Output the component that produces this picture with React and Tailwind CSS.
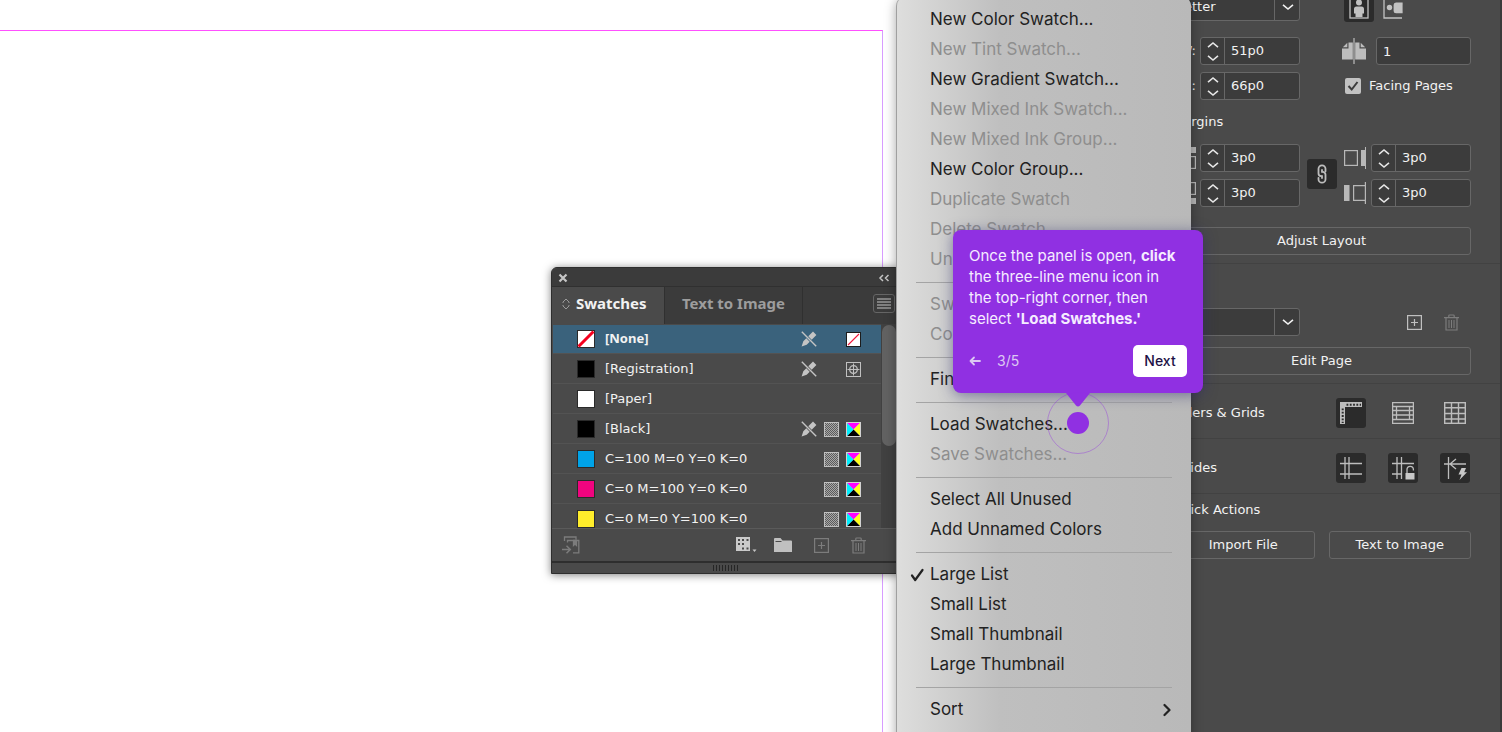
import { useState } from "react";

const MENU = [
  [
    { label: "New Color Swatch..." },
    { label: "New Tint Swatch...", disabled: true },
    { label: "New Gradient Swatch..." },
    { label: "New Mixed Ink Swatch...", disabled: true },
    { label: "New Mixed Ink Group...", disabled: true },
    { label: "New Color Group..." },
    { label: "Duplicate Swatch", disabled: true },
    { label: "Delete Swatch...", disabled: true },
    { label: "Ungroup Color Group", disabled: true },
  ],
  [
    { label: "Swatch Options...", disabled: true },
    { label: "Color Group Options...", disabled: true },
  ],
  [{ label: "Find Swatch..." }],
  [{ label: "Load Swatches..." }, { label: "Save Swatches...", disabled: true }],
  [{ label: "Select All Unused" }, { label: "Add Unnamed Colors" }],
  [
    { label: "Large List", checked: true },
    { label: "Small List" },
    { label: "Small Thumbnail" },
    { label: "Large Thumbnail" },
  ],
  [{ label: "Sort", submenu: true }],
];

const SWATCHES = [
  { name: "[None]", color: "none", locked: true, kind: "none", selected: true },
  { name: "[Registration]", color: "#000000", locked: true, kind: "registration" },
  { name: "[Paper]", color: "#ffffff" },
  { name: "[Black]", color: "#000000", locked: true, kind: "cmyk" },
  { name: "C=100 M=0 Y=0 K=0", color: "#00a3e8", kind: "cmyk" },
  { name: "C=0 M=100 Y=0 K=0", color: "#f0047f", kind: "cmyk" },
  { name: "C=0 M=0 Y=100 K=0", color: "#ffed2b", kind: "cmyk" },
];

/* ---------- icons ---------- */

function Chevron({ up, className }) {
  return (
    <svg viewBox="0 0 12 8" fill="none" stroke="currentColor" strokeWidth="1.6" className={className}>
      <path d={up ? "M1 6.200 6 2l5 4.200" : "M1 1.800 6 6l5-4.200"} />
    </svg>
  );
}

function NoEditIcon() {
  return (
    <svg viewBox="0 0 16 16" className="w-4 h-4 text-[#c4c4c4]">
      <path fill="currentColor" d="M12 .6 15.400 4l-4.700 4.700-3.400-3.400ZM5.300 7.300l3.400 3.400-3 3L.6 15.400l1.700-5.100Z" />
      <path stroke="currentColor" strokeWidth="1.400" d="m.8.800 14.400 14.400" />
    </svg>
  );
}

function TintIcon() {
  return (
    <svg viewBox="0 0 15 15" className="w-[15px] h-[15px]">
      <defs>
        <pattern id="dots" width="2" height="2" patternUnits="userSpaceOnUse">
          <rect width="2" height="2" fill="#a8a8a8" />
          <rect width="1" height="1" fill="#5c5c5c" />
          <rect x="1" y="1" width="1" height="1" fill="#5c5c5c" />
        </pattern>
      </defs>
      <rect width="15" height="15" fill="#c0c0c0" />
      <rect x="1" y="1" width="13" height="13" fill="url(#dots)" />
    </svg>
  );
}

function KindIcon({ kind }) {
  if (kind === "none") {
    return (
      <svg viewBox="0 0 15 15" className="w-[15px] h-[15px]">
        <rect x=".5" y=".5" width="14" height="14" fill="#fff" stroke="#1c1c1c" />
        <path stroke="#f0183c" strokeWidth="1.1" d="M2 13 13 2" />
      </svg>
    );
  }
  if (kind === "registration") {
    return (
      <svg viewBox="0 0 15 15" fill="none" stroke="#c0c0c0" className="w-[15px] h-[15px]">
        <rect x=".5" y=".5" width="14" height="14" />
        <circle cx="7.5" cy="7.5" r="3.8" strokeWidth="1.3" />
        <path d="M7.5 1.5v12M1.5 7.5h12" />
      </svg>
    );
  }
  return (
    <svg viewBox="0 0 15 15" className="w-[15px] h-[15px]">
      <rect width="15" height="15" fill="#d2d2d2" />
      <path fill="#ff00ff" d="M1 1h13L7.500 7.500Z" />
      <path fill="#ffff1e" d="M14 1v13L7.500 7.500Z" />
      <path fill="#000" d="M14 14H1l6.500-6.500Z" />
      <path fill="#00f0ff" d="M1 14V1l6.500 6.500Z" />
    </svg>
  );
}

function NewIcon() {
  return (
    <svg viewBox="0 0 15 15" fill="none" stroke="currentColor" className="w-[15px] h-[15px]">
      <rect x=".6" y=".6" width="13.800" height="13.800" strokeWidth="1.200" />
      <path strokeWidth="1.200" d="M7.500 4v7M4 7.500h7" />
    </svg>
  );
}

function TrashIcon() {
  return (
    <svg viewBox="0 0 15 17" fill="none" stroke="currentColor" className="w-[15px] h-[17px]">
      <path strokeWidth="1.200" d="M0 3.600h15M4.800 3.400V1.800Q4.800 1 5.600 1h3.800q.8 0 .8.800v1.600M2 4v12h11V4" />
      <path d="M5 6v8M7.500 6v8M10 6v8" />
    </svg>
  );
}

function PortraitIcon() {
  return (
    <svg viewBox="0 0 20 24" className="w-5 h-6 text-[#c2c2c2]">
      <rect x="1" y="1" width="18" height="22" fill="none" stroke="currentColor" strokeWidth="1.300" />
      <circle cx="10" cy="7.500" r="3" fill="currentColor" />
      <path fill="currentColor" d="M7.500 11.500h5q2.500 0 2.500 2.500v4.500h-1.500V22h-7v-3.500H5V14q0-2.500 2.500-2.500Z" />
    </svg>
  );
}

function LandscapeIcon() {
  return (
    <svg viewBox="0 0 20 24" className="w-5 h-6 text-[#c2c2c2]">
      <path fill="none" stroke="currentColor" strokeWidth="1.300" d="M19 4H1v19h18" />
      <circle cx="6.500" cy="12.500" r="2.700" fill="currentColor" />
      <path fill="currentColor" d="M13 7.500h6.600v10.800H13q-2.400 0-2.400-2.400V10q0-2.500 2.400-2.500Z" />
    </svg>
  );
}

function SpreadIcon() {
  return (
    <svg viewBox="0 0 24 26" className="w-6 h-[26px] text-[#bdbdbd]">
      <path fill="currentColor" d="M6.500 4.500h4.300v17H0V10.500h6.500ZM5.300 4.800v4.500H.8ZM17.500 4.500h-4.300v17H24V10.500h-6.500ZM18.700 4.800v4.500h4.500Z" />
      <path stroke="currentColor" strokeWidth="1.200" d="M12 0v26" />
    </svg>
  );
}

function MarginIcon({ side }) {
  if (side === "top" || side === "bottom") {
    return (
      <svg viewBox="0 0 20 22" className="w-5 h-[22px] text-[#b8b8b8]">
        <g transform={side === "bottom" ? "matrix(1 0 0 -1 0 22)" : undefined}>
          <rect width="20" height="6" fill="currentColor" />
          <rect x=".6" y="9.600" width="18.800" height="11.800" fill="none" stroke="currentColor" strokeWidth="1.200" />
        </g>
      </svg>
    );
  }
  return (
    <svg viewBox="0 0 22 22" className="w-[22px] h-[22px] text-[#b8b8b8]">
      {side === "outside" ? (
        <>
          <rect x=".6" y="3.600" width="12.800" height="14.800" fill="none" stroke="currentColor" strokeWidth="1.200" />
          <path fill="currentColor" d="M17 3h4V0h1v22h-1v-3h-4Z" />
        </>
      ) : (
        <>
          <rect y="3" width="5.500" height="16" fill="currentColor" />
          <path fill="none" stroke="currentColor" strokeWidth="1.200" d="M21 3.600H9.600v14.800H21M21.400 0v22" />
        </>
      )}
    </svg>
  );
}

function LinkIcon() {
  return (
    <svg viewBox="0 0 12 20" fill="none" stroke="#bdbdbd" strokeWidth="1.800" strokeLinecap="round" className="w-3 h-5">
      <path d="M5 12.200A3 3 0 0 1 2.500 9.200V4.800a3.500 3.500 0 0 1 7 0v2.400" />
      <path d="M7 7.800a3 3 0 0 1 2.500 3v4.400a3.500 3.500 0 0 1-7 0v-1.400" />
      <path d="M6 6v2M6 12v2" />
    </svg>
  );
}

function RulerIcon() {
  return (
    <svg viewBox="0 0 22 22" className="w-[22px] h-[22px]">
      <path fill="#bdbdbd" d="M0 0h22v5H5v17H0Z" />
      <path stroke="#2b2b2b" strokeWidth="2" strokeDasharray="1.800 1.500" d="M6.500 2.700H21" />
      <path stroke="#2b2b2b" strokeWidth="2" strokeDasharray="1.800 1.500" d="M2.700 6.500V21" />
    </svg>
  );
}

function BaselineIcon() {
  return (
    <svg viewBox="0 0 22 22" fill="none" stroke="#bdbdbd" strokeWidth="1.300" className="w-[22px] h-[22px]">
      <rect x=".6" y=".6" width="20.800" height="20.800" />
      <path d="M0 4.500h22M0 17.500h22M4.500 8.500h13M4.500 13h13M0 8.500h4M0 13h4M18 8.500h4M18 13h4M4.500 4.500v13M17.500 4.500v13" />
    </svg>
  );
}

function GridIcon() {
  return (
    <svg viewBox="0 0 22 22" fill="none" stroke="#bdbdbd" strokeWidth="1.400" className="w-[22px] h-[22px]">
      <rect x=".7" y=".7" width="20.600" height="20.600" />
      <path d="M7.500 0v22M14.500 0v22M0 5.800h22M0 11.500h22M0 17h22" />
    </svg>
  );
}

function GuidesIcon({ lock }) {
  return (
    <svg viewBox="0 0 24 24" fill="none" stroke="#bdbdbd" strokeWidth="1.300" className="w-6 h-6">
      {lock ? (
        <>
          <path d="M6 1v22M10.500 1v22M1 7.500h22M1 18h10" />
          <path d="M16 17v-3.500a3.200 3.200 0 0 1 6.400 0v1" />
          <rect x="14.500" y="17" width="9" height="6.500" fill="#c8c8c8" stroke="none" />
        </>
      ) : (
        <path d="M6 1v22M10 1v22M1 7.500h22M1 18h22" />
      )}
    </svg>
  );
}

function SmartGuidesIcon() {
  return (
    <svg viewBox="0 0 24 24" fill="none" stroke="#bdbdbd" strokeWidth="1.300" className="w-6 h-6">
      <path d="M5.500 1v22M1 8h22M13 3 7 8l6 5" />
      <path fill="#c8c8c8" stroke="none" d="M18.500 12h4.500l-1.800 4.200H24L16.500 24l2-5.500h-3Z" />
    </svg>
  );
}

function LibraryIcon() {
  return (
    <svg viewBox="0 0 18 18" fill="none" stroke="currentColor" strokeWidth="1.300" className="w-[18px] h-[18px]">
      <path d="M2.500 5V1H14v2.500M5.500 6.500v-2H16.800V16.800H11" />
      <path fill="currentColor" d="M11.500 4.500h3v5L13 8l-1.500 1.500Z" />
      <path strokeWidth="1.500" d="M0 13.500h8M4.500 9.800l3.800 3.700-3.800 3.700" />
    </svg>
  );
}

function SwatchViewsIcon() {
  return (
    <svg viewBox="0 0 22 16" className="w-[22px] h-4">
      <rect width="14" height="14" fill="#cacaca" />
      <g fill="#4a4a4a">
        <rect x="2" y="2" width="2" height="2" />
        <rect x="6" y="2" width="2" height="2" />
        <rect x="10.500" y="2" width="2" height="2" />
        <rect x="2" y="6" width="2" height="2" />
        <rect x="6" y="6" width="2" height="2" />
        <rect x="6" y="10.500" width="2" height="2" />
        <rect x="10.500" y="10.500" width="2" height="2" />
      </g>
      <path fill="#c4c4c4" d="M16.500 12.500h4l-2 2.500Z" />
    </svg>
  );
}

function FolderIcon() {
  return (
    <svg viewBox="0 0 18 14" className="w-[18px] h-3.5">
      <path fill="#c0c0c0" d="M0 1q0-1 1-1h5.500l2 2.500H17q1 0 1 1V14H0Z" />
      <path stroke="#4a4a4a" d="M1.500 3.500h6" />
    </svg>
  );
}

/* ---------- properties panel ---------- */

function Stepper({ id, label, value }) {
  const [text, setText] = useState(value);
  return (
    <div className="flex w-[100px] h-7 bg-[#3c3c3c] border border-[#676767] rounded-[3px]">
      <div className="w-6 flex flex-col border-r border-[#676767] text-[#e6e6e6]">
        <button aria-label={`Increase ${label}`} className="flex-1 flex items-center justify-center">
          <Chevron up className="w-3 h-2" />
        </button>
        <button aria-label={`Decrease ${label}`} className="flex-1 flex items-center justify-center">
          <Chevron className="w-3 h-2" />
        </button>
      </div>
      <input
        id={id}
        aria-label={label}
        value={text}
        onChange={(e) => setText(e.target.value)}
        className="min-w-0 flex-1 px-1.5 bg-transparent outline-none"
      />
    </div>
  );
}

function Dropdown({ label, options }) {
  return (
    <div className="relative w-32 h-7">
      <select
        aria-label={label}
        className="appearance-none w-full h-full pl-1 bg-[#3c3c3c] border border-[#676767] rounded-[3px] outline-none"
      >
        {options.map((o) => (
          <option key={o}>{o}</option>
        ))}
      </select>
      <span className="absolute inset-y-0 right-0 w-[26px] flex items-center justify-center border-l border-[#676767] pointer-events-none">
        <Chevron className="w-3 h-2" />
      </span>
    </div>
  );
}

function PanelButton({ children }) {
  return (
    <button className="w-full h-7 border border-[#676767] rounded-[3px] text-center">{children}</button>
  );
}

function ToolButton({ label, active, children }) {
  return (
    <button
      aria-label={label}
      className={`w-[30px] h-[30px] flex items-center justify-center rounded-[3px] ${active ? "bg-[#2b2b2b]" : ""}`}
    >
      {children}
    </button>
  );
}

function Properties() {
  return (
    <aside className="w-[350px] shrink-0 bg-[#4a4a4a] border-r-2 border-[#3a3a3a] text-[#f2f2f2] text-[13px] leading-5 font-['DejaVu_Sans',sans-serif]">
      {/* Page size and margins */}
      <section className="-mt-2 pl-5 pr-[29px] pb-2 border-b border-[#424242]">
        <div className="flex items-center">
          <Dropdown label="Page size" options={["Letter", "Legal", "Tabloid"]} />
          <div className="ml-11 flex gap-1">
            <ToolButton label="Portrait" active>
              <PortraitIcon />
            </ToolButton>
            <ToolButton label="Landscape">
              <LandscapeIcon />
            </ToolButton>
          </div>
        </div>
        <div className="mt-[15px] flex items-center">
          <label htmlFor="page-w" className="w-7 pr-1 text-right">W:</label>
          <Stepper id="page-w" label="Width" value="51p0" />
          <label htmlFor="page-count" aria-label="Pages" className="ml-[42px] w-[34px]">
            <SpreadIcon />
          </label>
          <input
            id="page-count"
            defaultValue="1"
            className="min-w-0 flex-1 h-7 px-1.5 bg-[#3c3c3c] border border-[#676767] rounded-[3px] outline-none"
          />
        </div>
        <div className="mt-[7px] flex items-center">
          <label htmlFor="page-h" className="w-7 pr-1 text-right">H:</label>
          <Stepper id="page-h" label="Height" value="66p0" />
          <label className="ml-[45px] flex items-center gap-2">
            <span className="relative w-4 h-4">
              <input type="checkbox" defaultChecked className="peer block appearance-none w-4 h-4 rounded-[2px] bg-[#c2c2c2]" />
              <svg viewBox="0 0 16 16" fill="none" stroke="#3c3c3c" strokeWidth="2" className="absolute inset-0 w-4 h-4 hidden peer-checked:block pointer-events-none">
                <path d="m3.500 8 3.200 3.500L12.500 4" />
              </svg>
            </span>
            Facing Pages
          </label>
        </div>
        <h2 className="my-3">Margins</h2>
        <div className="flex items-center justify-between">
          <div className="flex flex-col gap-[7px]">
            <div className="flex items-center gap-1">
              <span className="w-6 flex justify-end"><MarginIcon side="top" /></span>
              <Stepper label="Top margin" value="3p0" />
            </div>
            <div className="flex items-center gap-1">
              <span className="w-6 flex justify-end"><MarginIcon side="bottom" /></span>
              <Stepper label="Bottom margin" value="3p0" />
            </div>
          </div>
          <div className="pb-1">
            <ToolButton label="Make all settings the same" active>
              <LinkIcon />
            </ToolButton>
          </div>
          <div className="flex flex-col gap-[7px]">
            <div className="flex items-center gap-[5px]">
              <MarginIcon side="outside" />
              <Stepper label="Outside margin" value="3p0" />
            </div>
            <div className="flex items-center gap-[5px]">
              <MarginIcon side="inside" />
              <Stepper label="Inside margin" value="3p0" />
            </div>
          </div>
        </div>
        <div className="mt-5">
          <PanelButton>Adjust Layout</PanelButton>
        </div>
      </section>

      {/* Page */}
      <section className="pl-5 pr-[29px] pt-11 pb-2 border-b border-[#424242]">
        <div className="flex items-center">
          <Dropdown label="Page" options={["1"]} />
          <div className="ml-auto mr-3 flex items-center gap-[22px]">
            <button aria-label="New page" className="text-[#c0c0c0]">
              <NewIcon />
            </button>
            <button aria-label="Delete page" className="text-[#7c7c7c]">
              <TrashIcon />
            </button>
          </div>
        </div>
        <div className="mt-[11px]">
          <PanelButton>Edit Page</PanelButton>
        </div>
      </section>

      <section className="pl-5 pr-[30px] pt-[14px] pb-[10px] flex items-center border-b border-[#424242]">
        <h2 className="mr-auto">Rulers &amp; Grids</h2>
        <div className="flex gap-[22px]">
          <ToolButton label="Rulers" active><RulerIcon /></ToolButton>
          <ToolButton label="Baseline grid"><BaselineIcon /></ToolButton>
          <ToolButton label="Document grid"><GridIcon /></ToolButton>
        </div>
      </section>

      <section className="pl-5 pr-[30px] pt-[14px] pb-[10px] flex items-center border-b border-[#424242]">
        <h2 className="mr-auto">Guides</h2>
        <div className="flex gap-[22px]">
          <ToolButton label="Guides" active><GuidesIcon /></ToolButton>
          <ToolButton label="Lock guides" active><GuidesIcon lock /></ToolButton>
          <ToolButton label="Smart guides" active><SmartGuidesIcon /></ToolButton>
        </div>
      </section>

      <section className="pl-5 pr-[29px] pt-1.5">
        <h2>Quick Actions</h2>
        <div className="mt-[11px] grid grid-cols-2 gap-[14px]">
          <PanelButton>Import File</PanelButton>
          <PanelButton>Text to Image</PanelButton>
        </div>
      </section>
    </aside>
  );
}

/* ---------- swatches panel ---------- */

function SwatchRow({ swatch }) {
  return (
    <li
      className={`h-[30px] pl-6 pr-5 flex items-center border-y border-b-[#535353] border-t-transparent ${
        swatch.selected ? "bg-[#3a627c] bg-clip-padding font-bold font-['Noto_Sans',sans-serif]" : ""
      }`}
    >
      <svg viewBox="0 0 18 18" className="w-[18px] h-[18px] shrink-0">
        <rect x=".5" y=".5" width="17" height="17" fill={swatch.color === "none" ? "#fff" : swatch.color} stroke="#2a2a2a" />
        {swatch.color === "none" && <path stroke="#f5001e" strokeWidth="3" d="M1.500 16.500l15-15" />}
      </svg>
      <span className="ml-2.5">{swatch.name}</span>
      <span className="ml-auto flex items-center gap-[7px]">
        {swatch.locked && <NoEditIcon />}
        <span className="w-[15px]">{swatch.kind === "cmyk" && <TintIcon />}</span>
        <span className="w-[15px]">{swatch.kind && <KindIcon kind={swatch.kind} />}</span>
      </span>
    </li>
  );
}

function SwatchesPanel() {
  return (
    <div className="absolute right-[601px] top-[267px] w-[350px] bg-[#4a4a4a] border border-[#2e2e2e] rounded-t-md shadow-[0_1px_8px_rgba(0,0,0,0.5)] text-[#f2f2f2] text-[13px] font-['DejaVu_Sans',sans-serif]">
      <div className="h-[18px] pl-1.5 pr-2.5 pt-0.5 flex items-center justify-between bg-[#3b3b3b] rounded-t-md text-[#c6c6c6]">
        <button aria-label="Close">
          <svg viewBox="0 0 10 10" stroke="currentColor" strokeWidth="2.200" className="w-2.5 h-2.5">
            <path d="m1.500 1.500 7 7M8.500 1.500l-7 7" />
          </svg>
        </button>
        <button aria-label="Collapse">
          <svg viewBox="0 0 12 8" fill="none" stroke="currentColor" strokeWidth="1.500" className="w-3 h-2">
            <path d="M5 1 2 4l3 3M10.500 1l-3 3 3 3" />
          </svg>
        </button>
      </div>

      <div className="h-[38px] flex border-t border-[#303030] bg-[#3b3b3b] text-[15px] font-bold font-['Noto_Sans',sans-serif]" role="tablist">
        <button role="tab" aria-selected="true" className="w-[112px] pl-2.5 pb-1 flex items-center gap-1.5 bg-[#4a4a4a]">
          <svg viewBox="0 0 8 12" fill="none" stroke="#9a9a9a" className="w-2 h-3">
            <path d="M1 5V4l3-3 3 3v1M1 7v1l3 3 3-3V7" />
          </svg>
          Swatches
        </button>
        <button role="tab" aria-selected="false" className="w-[139px] pb-1 border-x border-[#303030] text-[#9d9d9d]">
          Text to Image
        </button>
        <button
          aria-label="Panel menu"
          className="ml-auto mr-[5px] mb-1 self-center w-[22px] h-[19px] flex items-center justify-center border border-[#666] rounded-[3px]"
        >
          <svg viewBox="0 0 14 11" stroke="#c6c6c6" strokeWidth="1.200" className="w-3.5 h-[11px]">
            <path d="M0 1h14M0 4h14M0 7h14M0 10h14" />
          </svg>
        </button>
      </div>

      <div className="flex h-[205px] border-b border-[#5a5a5a] overflow-hidden">
        <ul className="flex-1 ml-[1px]">
          {SWATCHES.map((s) => (
            <SwatchRow key={s.name} swatch={s} />
          ))}
        </ul>
        <div className="w-[19px] bg-[#414141]">
          <div className="w-[14px] h-[121px] mt-[1px] ml-[1px] rounded-full bg-[#626262]" />
        </div>
      </div>

      <div className="h-8 pl-2.5 pr-[34px] flex items-center text-[#7c7c7c]">
        <button aria-label="Add to library"><LibraryIcon /></button>
        <div className="ml-auto flex items-center gap-4">
          <button aria-label="Swatch views"><SwatchViewsIcon /></button>
          <button aria-label="New color group"><FolderIcon /></button>
          <div className="pl-1.5 flex items-center gap-[22px]">
            <button aria-label="New swatch"><NewIcon /></button>
            <button aria-label="Delete swatch"><TrashIcon /></button>
          </div>
        </div>
      </div>

      <div className="h-3 flex items-center justify-center border-t-2 border-[#2e2e2e]">
        <svg viewBox="0 0 26 6" stroke="#262626" className="w-[26px] h-1.5">
          <path d="M.5 0v6M3.500 0v6M6.500 0v6M9.500 0v6M12.500 0v6M15.500 0v6M18.500 0v6M21.500 0v6M24.500 0v6" />
        </svg>
      </div>
    </div>
  );
}

/* ---------- flyout menu ---------- */

function FlyoutMenu() {
  return (
    <div
      role="menu"
      className="absolute right-[311px] -top-1 -bottom-4 w-[295px] pt-[9px] rounded-[10px] border-l border-[#a0a0a0] bg-linear-to-r from-[#dededd] from-0% via-[#bfbfbf] via-35% to-[#b9b9b9] to-100% shadow-[0_2px_12px_rgba(0,0,0,0.35)] text-[17px] font-['Inter',sans-serif] text-[#222]"
    >
      {MENU.map((group, i) => (
        <div key={i}>
          {group.map((item) => (
            <button
              key={item.label}
              role="menuitem"
              disabled={item.disabled}
              className="w-full h-[30px] pl-[13px] pr-5 flex items-center text-left whitespace-nowrap disabled:text-[#8e8e8e]"
            >
              <span className="w-5">
                {item.checked && (
                  <svg viewBox="0 0 16 16" fill="none" stroke="currentColor" strokeWidth="2.200" strokeLinecap="round" strokeLinejoin="round" className="w-4 h-4">
                    <path d="m2 8.500 3.200 4.500L12.500 3" />
                  </svg>
                )}
              </span>
              {item.label}
              {item.submenu && (
                <svg viewBox="0 0 8 14" fill="none" stroke="currentColor" strokeWidth="2.200" strokeLinecap="round" strokeLinejoin="round" className="ml-auto w-2 h-3.5">
                  <path d="m1.500 2 5 5-5 5" />
                </svg>
              )}
            </button>
          ))}
          <hr className="mx-[19px] my-[7px] border-[#a4a4a4]" />
        </div>
      ))}
    </div>
  );
}

/* ---------- tour step ---------- */

function TourStep() {
  return (
    <div className="absolute right-[299px] top-[230px] w-[250px] rounded-lg bg-[#9030e2] shadow-[0_2px_14px_rgba(40,40,110,0.5)] px-4 pt-[15px] pb-4 text-sm font-['Inter',sans-serif] text-[#f5ecff]">
      <p className="text-[15px] leading-[21px] whitespace-nowrap">
        Once the panel is open, <b>click</b>
        <br />
        the three-line menu icon in
        <br />
        the top-right corner, then
        <br />
        select <b>'Load Swatches.'</b>
      </p>
      <div className="mt-4 flex items-center">
        <button aria-label="Previous step">
          <svg viewBox="0 0 12 10" fill="none" stroke="#dcc8f2" strokeWidth="1.800" strokeLinecap="round" strokeLinejoin="round" className="w-3 h-2.5">
            <path d="M11 5H1.500M5 1.500 1.500 5 5 8.500" />
          </svg>
        </button>
        <span className="ml-4 text-[#dcc8f2]">3/5</span>
        <button className="ml-auto w-[54px] h-8 rounded-[5px] bg-white text-[#1d1145] font-medium">Next</button>
      </div>
      <svg viewBox="0 0 24 14" className="absolute top-full left-1/2 -translate-x-1/2 w-6 h-3.5">
        <path fill="#9030e2" d="M0 0h24L14 12.500q-2 2-4 0Z" />
      </svg>
      <div className="absolute -bottom-[61px] left-1/2 -translate-x-1/2 w-[62px] h-[62px] rounded-full border border-[#9030e2]/40 flex items-center justify-center">
        <div className="w-[22px] h-[22px] rounded-full bg-[#9030e2]" />
      </div>
    </div>
  );
}

export default function App() {
  return (
    <div className="relative h-screen flex overflow-hidden bg-white">
      {/* Document page with its margin guides */}
      <main className="flex-1 pt-[30px] pr-[269px]">
        <div className="h-full border-t border-r border-t-[#ff50ff] border-r-[#d79cff]" />
      </main>
      <Properties />
      <SwatchesPanel />
      <FlyoutMenu />
      <TourStep />
    </div>
  );
}
